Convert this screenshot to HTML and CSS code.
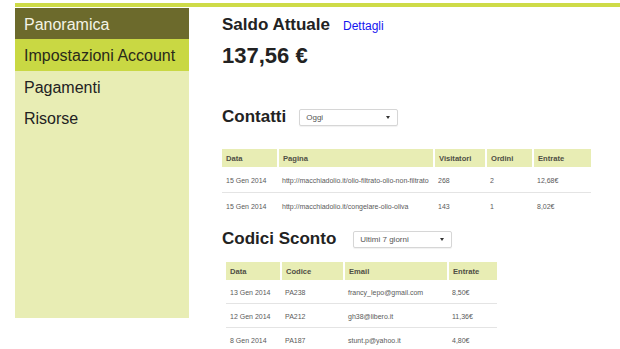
FILE: index.html
```html
<!DOCTYPE html>
<html lang="it">
<head>
  <meta charset="UTF-8" />
  <title>Panoramica</title>
  <link rel="stylesheet" href="styles.css">
</head>
<body>

  <!-- Top strip -->
  <div class="topbar"></div>

  <div class="layout">
    <!-- Sidebar -->
    <nav class="sidebar">
      <a class="nav-item active" href="#">Panoramica</a>
      <a class="nav-item current" href="#">Impostazioni Account</a>
      <a class="nav-item" href="#">Pagamenti</a>
      <a class="nav-item" href="#">Risorse</a>
    </nav>

    <!-- Main -->
    <main class="content">
      <div class="balance-head">
        <h2>Saldo Attuale</h2>
        <a class="details-link" href="#">Dettagli</a>
      </div>
      <div class="balance">137,56 €</div>

      <div class="section-head contacts-head">
        <h2>Contatti</h2>
        <div class="picker">Oggi</div>
      </div>

      <table class="data contacts">
        <colgroup>
          <col style="width:56px"><col style="width:156px"><col style="width:52px"><col style="width:47px"><col style="width:58px">
        </colgroup>
        <thead>
          <tr><th>Data</th><th>Pagina</th><th>Visitatori</th><th>Ordini</th><th>Entrate</th></tr>
        </thead>
        <tbody>
          <tr><td>15 Gen 2014</td><td>http://macchiadolio.it/olio-filtrato-olio-non-filtrato</td><td>268</td><td>2</td><td>12,68€</td></tr>
          <tr><td>15 Gen 2014</td><td>http://macchiadolio.it/congelare-olio-oliva</td><td>143</td><td>1</td><td>8,02€</td></tr>
        </tbody>
      </table>

      <div class="section-head codes-head">
        <h2>Codici Sconto</h2>
        <div class="picker">Ultimi 7 giorni</div>
      </div>

      <table class="data codes">
        <colgroup>
          <col style="width:55px"><col style="width:63px"><col style="width:104px"><col style="width:49px">
        </colgroup>
        <thead>
          <tr><th>Data</th><th>Codice</th><th>Email</th><th>Entrate</th></tr>
        </thead>
        <tbody>
          <tr><td>13 Gen 2014</td><td>PA238</td><td>francy_lepo@gmail.com</td><td>8,50€</td></tr>
          <tr><td>12 Gen 2014</td><td>PA212</td><td>gh38@libero.it</td><td>11,36€</td></tr>
          <tr><td>8 Gen 2014</td><td>PA187</td><td>stunt.p@yahoo.it</td><td>4,80€</td></tr>
        </tbody>
      </table>
    </main>
  </div>

</body>
</html>
```

FILE: styles.css
```css
:root {
  --olive: #6c6a2c;
  --lime: #c9d843;
  --lime-bar: #cedb48;
  --pale: #e8edb4;
  --text: #222222;
  --muted: #5a5a5a;
}

body {
  font-family: 'Liberation Sans', Arial, sans-serif;
  margin: 0;
  background: #fff;
  color: var(--text);
  overflow: hidden;
}

.topbar {
  margin: 3px 0 0 15px;
  height: 4px;
  background: var(--lime-bar);
}

.layout {
  display: flex;
  margin-top: 1px;
}

/* Sidebar */
.sidebar {
  display: flex;
  flex-direction: column;
  width: 174px;
  height: 310px;
  margin-left: 15px;
  background: var(--pale);
  flex-shrink: 0;
}

.nav-item {
  display: block;
  box-sizing: border-box;
  height: 31px;
  padding: 3px 0 0 9px;
  line-height: 28px;
  font-size: 16px;
  color: var(--text);
  text-decoration: none;
}

.nav-item.active {
  background: var(--olive);
  color: #f4f4e6;
}

.nav-item.current {
  height: 32px;
  background: var(--lime);
  color: #2a2a1a;
}

/* Main */
.content {
  margin-left: 33px;
  padding-top: 7px;
}

h2 {
  margin: 0;
  font-size: 17px;
  line-height: 20px;
  font-weight: bold;
  color: var(--text);
}

.balance-head {
  display: flex;
  align-items: baseline;
  gap: 13px;
}

.details-link {
  font-size: 12px;
  color: #1414f0;
  text-decoration: none;
}

.balance {
  margin-top: 8px;
  font-size: 22px;
  line-height: 26px;
  font-weight: bold;
}

.section-head {
  display: flex;
  align-items: center;
  gap: 13px;
}

.contacts-head {
  margin-top: 38px;
}

.codes-head {
  margin-top: 11px;
  gap: 17px;
}

.picker {
  position: relative;
  box-sizing: border-box;
  width: 99px;
  height: 17px;
  padding-left: 6px;
  border: 1px solid #d6d6d6;
  border-radius: 2px;
  box-shadow: 0 1px 1px rgba(0, 0, 0, 0.06);
  font-size: 8px;
  line-height: 15px;
  color: #555;
  background: #fff;
}

.picker::after {
  content: "";
  position: absolute;
  right: 7px;
  top: 6px;
  border-top: 3px solid #333;
  border-left: 2.5px solid transparent;
  border-right: 2.5px solid transparent;
}

/* Tables */
.data {
  border-collapse: collapse;
  table-layout: fixed;
  font-size: 7px;
  color: var(--muted);
}

.data th {
  height: 18px;
  padding: 0 4px;
  text-align: left;
  font-size: 7.6px;
  font-weight: bold;
  color: #4f4f45;
  background: var(--pale);
  border-left: 2px solid #fff;
}

.data th:first-child {
  border-left: none;
}

.data td {
  padding: 2px 4px 0;
  white-space: nowrap;
  overflow: hidden;
}

.data tbody tr + tr td {
  border-top: 1px solid #e4e4e4;
}

.contacts {
  margin-top: 22px;
}

.contacts td {
  height: 23px;
}

.codes {
  margin: 13px 0 0 4px;
}

.codes td {
  height: 21px;
}
```
